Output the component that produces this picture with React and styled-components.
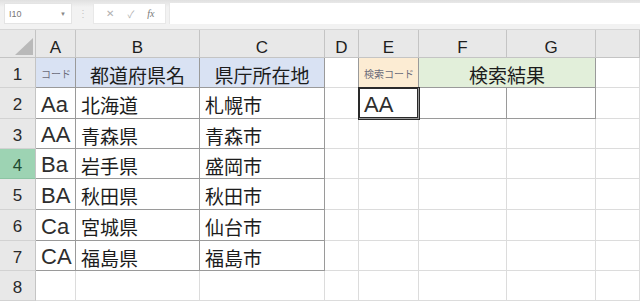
import React from "react"
import styled, { createGlobalStyle } from "styled-components"

const GRID = "#dcdcdc"
const LINE = "#9a9a9a"
const HEAD_LINE = "#c4c4c4"

const GlobalStyle = createGlobalStyle`
  html, body {
    margin: 0;
    padding: 0;
    background: #ffffff;
    overflow: hidden;
  }
  body {
    font-family: "Liberation Sans", "Noto Sans CJK JP", sans-serif;
  }
`

const Page = styled.div`
  width: 640px;
  height: 301px;
  display: flex;
  flex-direction: column;
  overflow: hidden;
`

const Toolbar = styled.div`
  height: 30px;
  flex: none;
  display: flex;
  align-items: center;
  padding: 0 0 2px 4px;
  box-sizing: border-box;
  background: linear-gradient(#e0e0e0 0, #f2f2f2 7px);
  border-bottom: 1px solid #d6d6d6;
`

const NameBox = styled.div`
  width: 68px;
  height: 21px;
  box-sizing: border-box;
  background: #fff;
  border: 1px solid #e4e4e4;
  display: flex;
  align-items: center;
  justify-content: space-between;
  padding: 0 5px 0 4px;
  font-size: 9px;
  color: #777;
`

const Caret = styled.span`
  font-size: 6px;
  color: #888;
`

const Dots = styled.span`
  width: 21px;
  text-align: center;
  color: #c4c4c4;
  font-size: 10px;
`

const FxBox = styled.div`
  width: 73px;
  height: 21px;
  box-sizing: border-box;
  background: #fff;
  border: 1px solid #e8e8e8;
  display: flex;
  align-items: center;
  justify-content: space-around;
  padding: 0 4px 0 6px;
  color: #b0b0b0;
  font-size: 10px;
`

const Fx = styled.span`
  font-family: "Liberation Serif", serif;
  font-style: italic;
  font-size: 10px;
  color: #777;
`

const Formula = styled.div`
  flex: 1;
  height: 21px;
  margin-left: 3px;
  background: #fff;
  border-left: 1px solid #e8e8e8;
`

const Sheet = styled.div`
  flex: 1;
  display: grid;
  grid-template-columns: 36px 40px 124px 125px 34px 60px 88px 89px 1fr;
  grid-template-rows: 28px 30px 31px 30px 30px 31px 31px 30px 30px;
`

const Corner = styled.div`
  background: #e8e8e8;
  border-right: 1px solid ${HEAD_LINE};
  border-bottom: 1px solid ${HEAD_LINE};
  display: flex;
  align-items: flex-end;
  justify-content: flex-end;
  padding: 0 2px 2px 0;
`

const ColHead = styled.div`
  background: #e8e8e8;
  border-right: 1px solid ${HEAD_LINE};
  border-bottom: 1px solid ${HEAD_LINE};
  display: flex;
  align-items: center;
  justify-content: center;
  padding-top: 9px;
  font-size: 17px;
  color: #1e1e1e;
`

const RowHead = styled.div`
  background: ${({ $active }) => ($active ? "#9dd3b3" : "#e8e8e8")};
  border-right: 1px solid ${HEAD_LINE};
  border-bottom: 1px solid ${({ $active }) => ($active ? "#8cc4a3" : "#d2d2d2")};
  display: flex;
  align-items: center;
  justify-content: center;
  padding-top: 4px;
  font-size: 17px;
  color: ${({ $active }) => ($active ? "#1f4a30" : "#2a2a2a")};
`

const Cell = styled.div`
  grid-column: ${({ $span }) => ($span ? `span ${$span}` : "auto")};
  background: ${({ $bg }) => $bg || "#fff"};
  border-right: 1px solid ${({ $r }) => $r || GRID};
  border-bottom: 1px solid ${({ $b }) => $b || GRID};
  display: flex;
  align-items: center;
  justify-content: ${({ $center }) => ($center ? "center" : "flex-start")};
  padding: ${({ $small }) => ($small ? "2px 0 0 5px" : "3px 0 0 5px")};
  ${({ $center }) => $center && "padding-left: 0;"}
  font-family: ${({ $latin }) =>
    $latin
      ? `"Liberation Sans", sans-serif`
      : `"Noto Sans CJK JP", "Liberation Sans", sans-serif`};
  font-size: ${({ $small, $latin }) => ($small ? "10px" : $latin ? "22px" : "19px")};
  color: ${({ $small, $latin }) => ($small ? "#6b6b7a" : $latin ? "#2e2e2e" : "#1c1c1c")};
  white-space: nowrap;
  overflow: hidden;
  box-shadow: ${({ $thick }) => ($thick ? "0 0 0 1px #2a2a2a, inset 0 0 0 1px #2a2a2a" : "none")};
  z-index: ${({ $thick }) => ($thick ? 1 : 0)};
`

const BLUE = "#d9e2f3"
const PEACH = "#fcecd3"
const GREEN = "#e2efda"

const columns = ["A", "B", "C", "D", "E", "F", "G", ""]

const prefectures = [
  ["Aa", "北海道", "札幌市"],
  ["AA", "青森県", "青森市"],
  ["Ba", "岩手県", "盛岡市"],
  ["BA", "秋田県", "秋田市"],
  ["Ca", "宮城県", "仙台市"],
  ["CA", "福島県", "福島市"],
]

const App = () => {
  return (
    <Page>
      <GlobalStyle />
      <Toolbar>
        <NameBox>
          I10<Caret>▼</Caret>
        </NameBox>
        <Dots>⋮</Dots>
        <FxBox>
          <span>✕</span>
          <span>✓</span>
          <Fx>fx</Fx>
        </FxBox>
        <Formula />
      </Toolbar>

      <Sheet>
        <Corner>
          <svg width="18" height="17" viewBox="0 0 18 17">
            <polygon points="18,0 18,17 0,17" fill="#b9b9b9" />
          </svg>
        </Corner>
        {columns.map((c, i) => (
          <ColHead key={i}>{c}</ColHead>
        ))}

        {/* row 1: headings */}
        <RowHead>1</RowHead>
        <Cell $bg={BLUE} $r={LINE} $b={LINE} $small>
          コード
        </Cell>
        <Cell $bg={BLUE} $r={LINE} $b={LINE} $center>
          都道府県名
        </Cell>
        <Cell $bg={BLUE} $r={LINE} $b={LINE} $center>
          県庁所在地
        </Cell>
        <Cell $r={LINE} />
        <Cell $bg={PEACH} $r={LINE} $b={LINE} $small>
          検索コード
        </Cell>
        <Cell $bg={GREEN} $r={LINE} $b={LINE} $span={2} $center>
          検索結果
        </Cell>
        <Cell />

        {prefectures.map(([code, pref, city], i) => {
          const row = i + 2
          return (
            <React.Fragment key={row}>
              <RowHead $active={row === 4}>{row}</RowHead>
              <Cell $r={LINE} $b={LINE} $latin>
                {code}
              </Cell>
              <Cell $r={LINE} $b={LINE}>
                {pref}
              </Cell>
              <Cell $r={LINE} $b={LINE}>
                {city}
              </Cell>
              {row === 2 ? (
                <>
                  <Cell $r={LINE} />
                  <Cell $r={LINE} $b={LINE} $latin $thick>
                    AA
                  </Cell>
                  <Cell $r={LINE} $b={LINE} />
                  <Cell $r={LINE} $b={LINE} />
                  <Cell />
                </>
              ) : (
                <>
                  <Cell />
                  <Cell />
                  <Cell />
                  <Cell />
                  <Cell />
                </>
              )}
            </React.Fragment>
          )
        })}

        <RowHead>8</RowHead>
        {columns.map((c, i) => (
          <Cell key={i} />
        ))}
      </Sheet>
    </Page>
  )
}

export default App
